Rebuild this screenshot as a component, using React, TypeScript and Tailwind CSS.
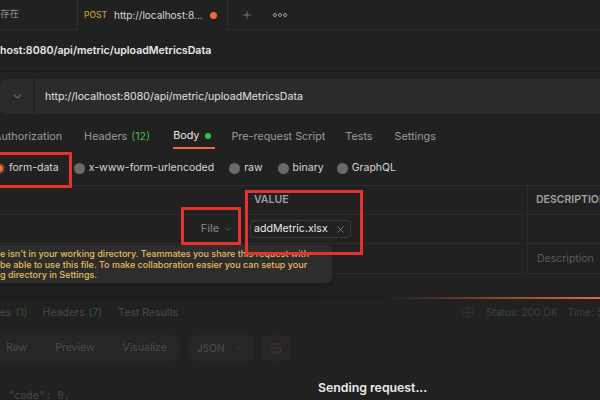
import { ChevronDown, Globe, Plus, WrapText, X } from "lucide-react";

export default function App() {
  const tabs = [
    { name: "Authorization", ml: "-ml-[6px]" },
    { name: "Headers", count: "(12)", ml: "ml-[22px]" },
    { name: "Body", active: true, ml: "ml-[23px]" },
    { name: "Pre-request Script", ml: "ml-[20px]" },
    { name: "Tests", ml: "ml-[20px]" },
    { name: "Settings", ml: "ml-[22px]" },
  ];

  return (
    <div
      className="relative w-[600px] h-[400px] overflow-hidden bg-[#212121] text-[#d0d0d0]"
      style={{ fontFamily: "Inter, 'Noto Sans CJK SC', sans-serif" }}
    >
      {/* Tab bar */}
      <div className="flex h-[30px] text-[11px]">
        <div className="w-[78px] shrink-0 flex items-center border-r border-b border-[#2e2e2e] text-[#8c8c8c] text-[9.5px]">
          存在
        </div>
        <div className="w-[150px] shrink-0 flex items-center pl-[6px] border-r border-[#2e2e2e]">
          <span className="text-[#c99a2e] text-[8.5px] font-medium">POST</span>
          <span className="ml-[7px] text-[#d6d6d6] text-[10px]">http://localhost:8...</span>
          <span className="ml-[7px] w-[7px] h-[7px] rounded-full bg-[#f06a3c]" />
        </div>
        <div className="flex-1 flex items-center border-b border-[#2e2e2e] pl-[13px] gap-[20px] text-[#9a9a9a]">
          <Plus size={12} strokeWidth={1.3} />
          <div className="flex gap-[1px]">
            <span className="w-[4px] h-[4px] rounded-full border border-[#9a9a9a]" />
            <span className="w-[4px] h-[4px] rounded-full border border-[#9a9a9a]" />
            <span className="w-[4px] h-[4px] rounded-full border border-[#9a9a9a]" />
          </div>
        </div>
      </div>

      {/* Request title */}
      <div className="h-[42px] flex items-center border-b border-[#1a1a1a] text-[10.6px] font-semibold text-[#e8e8e8]">
        host:8080/api/metric/uploadMetricsData
      </div>

      {/* URL bar */}
      <div className="pt-[7px]">
        <div className="h-[35px] flex items-center bg-[#2b2b2b] rounded-l-md">
          <div className="w-[35px] shrink-0 h-full flex items-center justify-end pr-[9px] border-r-2 border-[#222222] text-[#9a9a9a]">
            <ChevronDown size={13} strokeWidth={1.5} />
          </div>
          <span className="ml-[10px] text-[10.6px] text-[#e0e0e0]">
            http://localhost:8080/api/metric/uploadMetricsData
          </span>
        </div>
      </div>

      {/* Request tabs */}
      <div className="h-[37px] flex items-start pt-[14px] text-[10.8px] text-[#9a9a9a] whitespace-nowrap">
        {tabs.map((t) => (
          <div
            key={t.name}
            className={`${t.ml} shrink-0 flex items-center h-[21px] ${
              t.active ? "border-b-2 border-[#f06a3c] text-[#e8e8e8] pr-[4px] -mr-[4px]" : ""
            }`}
          >
            <span className="leading-[16px] pb-[3px]">{t.name}</span>
            {t.count && <span className="ml-[4px] pb-[3px] leading-[16px] text-[#4caf50]">{t.count}</span>}
            {t.active && <span className="ml-[6px] mb-[3px] w-[6px] h-[6px] rounded-full bg-[#2ecc40]" />}
          </div>
        ))}
      </div>

      {/* Body types */}
      <div className="h-[34px] flex items-center text-[10.5px] text-[#d6d6d6] whitespace-nowrap">
        <span className="-ml-[6px] shrink-0 w-[11px] h-[11px] rounded-full bg-[#f06a3c] border-2 border-[#5a3a2e]" />
        <span className="ml-[4px]">form-data</span>
        <span className="ml-[15px] shrink-0 w-[11px] h-[11px] rounded-full bg-[#6a6a6a]" />
        <span className="ml-[4px]">x-www-form-urlencoded</span>
        <span className="ml-[15px] shrink-0 w-[11px] h-[11px] rounded-full bg-[#6a6a6a]" />
        <span className="ml-[4px]">raw</span>
        <span className="ml-[15px] shrink-0 w-[11px] h-[11px] rounded-full bg-[#6a6a6a]" />
        <span className="ml-[4px]">binary</span>
        <span className="ml-[13px] shrink-0 w-[11px] h-[11px] rounded-full bg-[#6a6a6a]" />
        <span className="ml-[4px]">GraphQL</span>
      </div>

      {/* Params table */}
      <div className="border-t border-[#2b2b2b]">
        <div className="h-[29px] flex border-b border-[#2b2b2b] text-[10.5px] font-semibold text-[#a0a0a0]">
          <div className="w-[246px] shrink-0 border-r border-[#2b2b2b]" />
          <div className="w-[282px] shrink-0 border-r border-[#2b2b2b] flex items-center pl-[8px]">VALUE</div>
          <div className="flex-1 flex items-center pl-[8px] whitespace-nowrap overflow-hidden">DESCRIPTION</div>
        </div>
        <div className="h-[29px] flex border-b border-[#2b2b2b]">
          <div className="w-[246px] shrink-0 border-r border-[#2b2b2b] flex items-center justify-end pr-[12px] text-[10.8px] font-medium text-[#7c7c7c]">
            File
            <ChevronDown size={10} strokeWidth={1.5} className="ml-[4px]" />
          </div>
          <div className="w-[282px] shrink-0 border-r border-[#2b2b2b] flex items-center pl-[4px]">
            <div className="h-[18px] flex items-center px-[3px] rounded-[4px] border border-[#3a3a3a] text-[10.6px] text-[#e8e8e8]">
              addMetric.xlsx
              <X size={11} strokeWidth={1.5} className="ml-[7px] mr-[1px] text-[#a0a0a0]" />
            </div>
          </div>
          <div className="flex-1" />
        </div>
        <div className="h-[30px] flex border-b border-[#2b2b2b]">
          <div className="w-[246px] shrink-0 border-r border-[#2b2b2b]" />
          <div className="w-[282px] shrink-0 border-r border-[#2b2b2b]" />
          <div className="flex-1 flex items-center pl-[9px] text-[10.5px] text-[#5a5a5a] whitespace-nowrap">Description</div>
        </div>
      </div>

      {/* Response (dimmed) */}
      <div className="mt-[23px] relative border-t border-[#1a1a1a]">
        <div className="absolute -top-[1px] right-0 w-[220px] h-[2px] bg-gradient-to-r from-transparent to-[#e0683a]" />
        <div className="h-[29px] flex items-center text-[10.5px] text-[#4a4a4a] whitespace-nowrap">
          <span>es</span>
          <span className="ml-[4px] text-[#2f5a33]">(1)</span>
          <span className="ml-[15px]">Headers</span>
          <span className="ml-[4px] text-[#2f5a33]">(7)</span>
          <span className="ml-[16px]">Test Results</span>
          <Globe size={13} strokeWidth={1.3} className="ml-[283px] shrink-0 text-[#3a3a3a]" />
          <span className="ml-[12px] text-[10px] text-[#37473a]">Status: 200 OK</span>
          <span className="ml-[10px] text-[10px] text-[#3e3e3e]">Time: 5</span>
        </div>
        <div className="mt-[8px] h-[26px] flex items-center text-[10.5px] text-[#4c4c4c]">
          <div className="w-[180px] shrink-0 h-full flex items-center bg-[#262626] rounded-r-md pl-[6px] gap-[28px]">
            <span>Raw</span>
            <span>Preview</span>
            <span>Visualize</span>
          </div>
          <div className="ml-[8px] w-[67px] shrink-0 h-full flex items-center justify-between pl-[9px] pr-[12px] bg-[#262626] rounded-md">
            <span className="text-[10px] font-medium">JSON</span>
            <ChevronDown size={10} strokeWidth={1.5} />
          </div>
          <div className="ml-[7px] w-[28px] shrink-0 h-full flex items-center justify-center bg-[#262626] rounded-md text-[#5c3a2e]">
            <WrapText size={14} strokeWidth={1.5} />
          </div>
        </div>
        <div
          className="mt-[27px] pl-[8px] text-[10.3px] text-[#4a4a4a]"
          style={{ fontFamily: "'DejaVu Sans Mono', monospace" }}
        >
          "code": 0,
        </div>
        <div className="absolute left-[318px] top-[81px] text-[12.3px] font-semibold text-[#ececec]">
          Sending request...
        </div>
      </div>

      {/* Tooltip */}
      <div className="absolute -left-[10px] top-[245px] w-[342px] h-[38px] rounded-md bg-[#2d2d2d] shadow-lg pl-[10px] pt-[4px] text-[9px] font-medium leading-[10.5px] text-[#e6bd5a] whitespace-nowrap">
        <div>e isn't in your working directory. Teammates you share this request with</div>
        <div>be able to use this file. To make collaboration easier you can setup your</div>
        <div>g directory in Settings.</div>
      </div>

      {/* Annotation boxes */}
      <div className="absolute -left-[4px] top-[152px] w-[76px] h-[36px] border-[3px] border-[#e5322b]" />
      <div className="absolute left-[181px] top-[207px] w-[60px] h-[38px] border-[3px] border-[#e5322b]" />
      <div className="absolute left-[245px] top-[190px] w-[118px] h-[65px] border-[3px] border-[#e5322b]" />
    </div>
  );
}
